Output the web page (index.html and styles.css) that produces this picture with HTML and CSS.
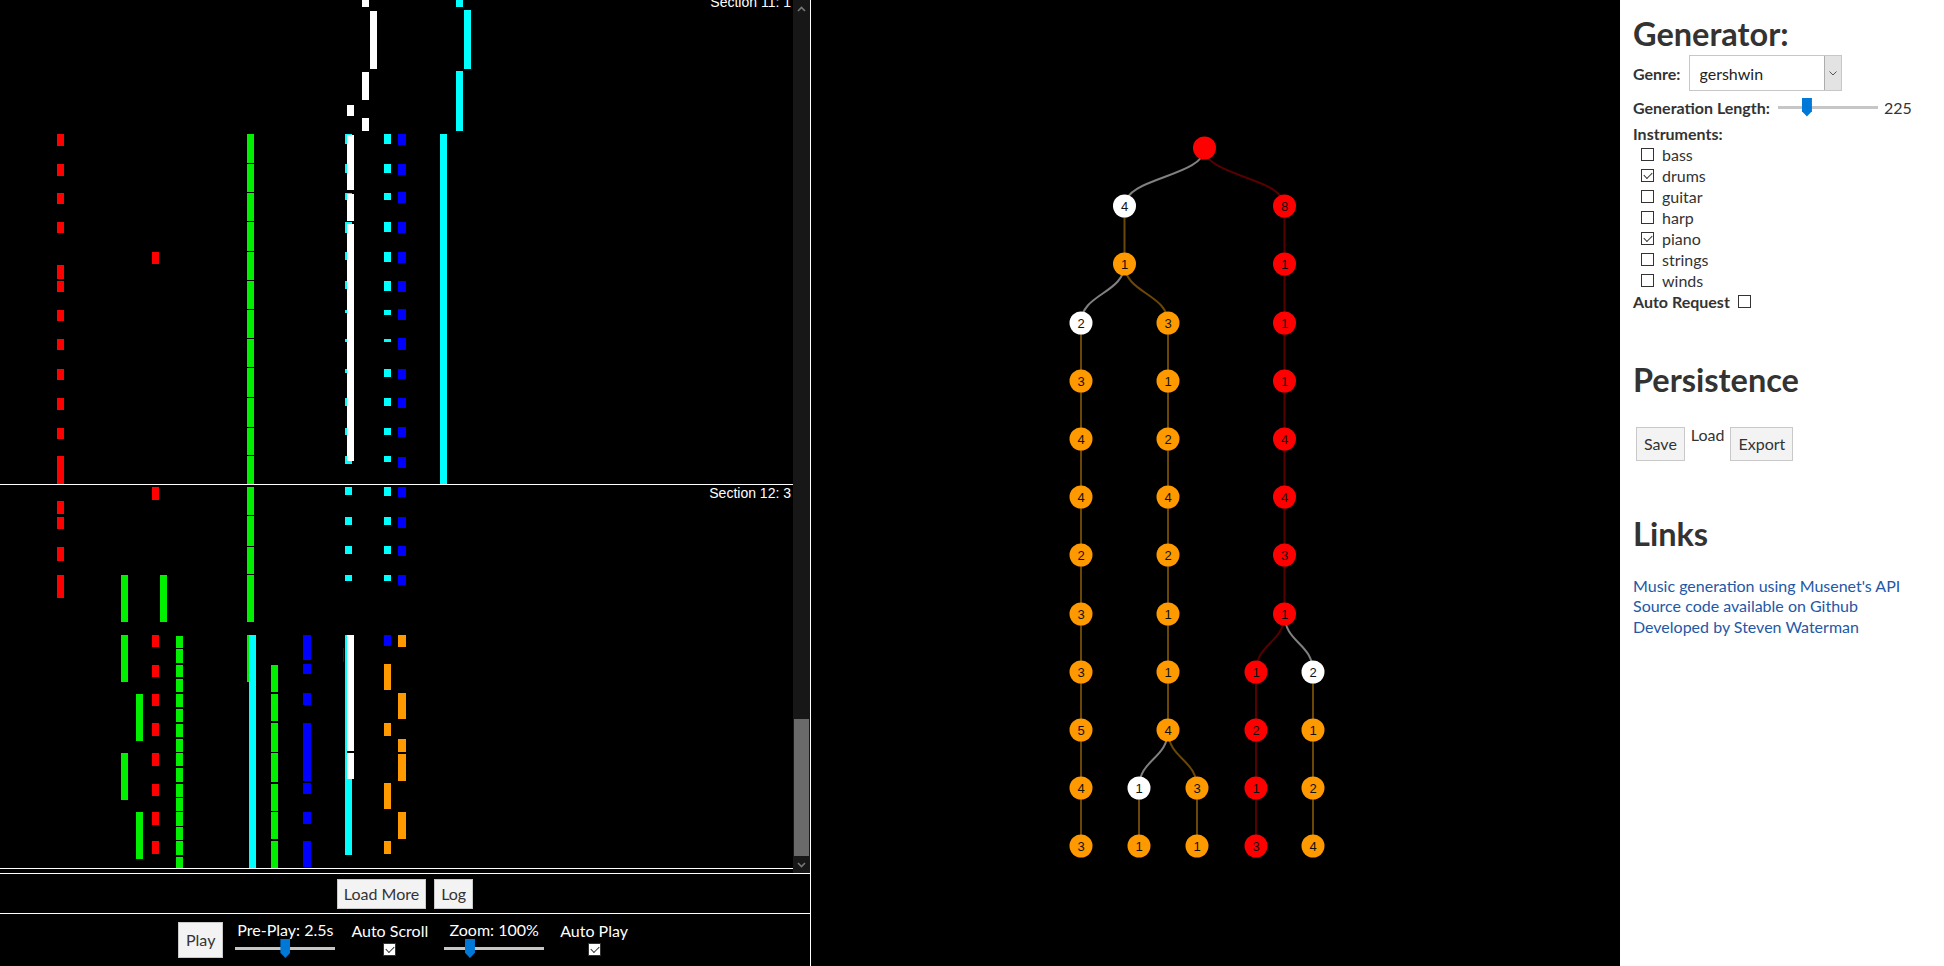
FILE: index.html
```html
<!DOCTYPE html>
<html lang="en">
<head>
<meta charset="utf-8">
<title>Musenet Tree</title>
<link rel="stylesheet" href="styles.css">
</head>
<body>
<div class="app">
  <section class="player">
    <div class="roll">
      <svg class="roll-svg" width="793" height="873" viewBox="0 0 793 873">
        <g fill="#ff0000">
          <rect x="57" y="134" width="7" height="12"/><rect x="57" y="164" width="7" height="12"/><rect x="57" y="193" width="7" height="11"/><rect x="57" y="222" width="7" height="11"/><rect x="57" y="265" width="7" height="14"/><rect x="57" y="281" width="7" height="11"/><rect x="57" y="310" width="7" height="11"/><rect x="57" y="339" width="7" height="11"/><rect x="57" y="369" width="7" height="11"/><rect x="57" y="398" width="7" height="12"/><rect x="57" y="428" width="7" height="11"/><rect x="57" y="456" width="7" height="28"/>
          <rect x="152" y="252" width="7" height="12"/>
          <rect x="152" y="487" width="7" height="13"/>
          <rect x="57" y="501" width="7" height="13"/><rect x="57" y="517" width="7" height="12"/><rect x="57" y="547" width="7" height="14"/><rect x="57" y="575" width="7" height="23"/>
          <rect x="152" y="635" width="7" height="12"/><rect x="152" y="665" width="7" height="12"/><rect x="152" y="694" width="7" height="12"/><rect x="152" y="723" width="7" height="13"/><rect x="152" y="753" width="7" height="13"/><rect x="152" y="784" width="7" height="12"/><rect x="152" y="812" width="7" height="13"/><rect x="152" y="841" width="7" height="13"/>
        </g>
        <g fill="#00f000">
          <rect x="247" y="134" width="7" height="29"/><rect x="247" y="164" width="7" height="28"/><rect x="247" y="193" width="7" height="28"/><rect x="247" y="222" width="7" height="29"/><rect x="247" y="252" width="7" height="28"/><rect x="247" y="281" width="7" height="28"/><rect x="247" y="310" width="7" height="28"/><rect x="247" y="339" width="7" height="28"/><rect x="247" y="368" width="7" height="29"/><rect x="247" y="398" width="7" height="29"/><rect x="247" y="428" width="7" height="27"/><rect x="247" y="456" width="7" height="28"/>
          <rect x="247" y="487" width="7" height="28"/><rect x="247" y="516" width="7" height="30"/><rect x="247" y="547" width="7" height="27"/><rect x="247" y="575" width="7" height="47"/>
          <rect x="247" y="635" width="2" height="47"/>
          <rect x="121" y="575" width="7" height="47"/><rect x="121" y="635" width="7" height="47"/><rect x="121" y="753" width="7" height="47"/>
          <rect x="160" y="575" width="7" height="47"/>
          <rect x="136" y="694" width="7" height="47"/><rect x="136" y="812" width="7" height="47"/>
          <rect x="176" y="636" width="7" height="12"/><rect x="176" y="649" width="7" height="14"/><rect x="176" y="665" width="7" height="12"/><rect x="176" y="679" width="7" height="13"/><rect x="176" y="694" width="7" height="13"/><rect x="176" y="709" width="7" height="13"/><rect x="176" y="724" width="7" height="13"/><rect x="176" y="739" width="7" height="13"/><rect x="176" y="753" width="7" height="13"/><rect x="176" y="768" width="7" height="14"/><rect x="176" y="784" width="7" height="13"/><rect x="176" y="798" width="7" height="13"/><rect x="176" y="812" width="7" height="14"/><rect x="176" y="827" width="7" height="13"/><rect x="176" y="841" width="7" height="14"/><rect x="176" y="857" width="7" height="11"/>
          <rect x="271" y="665" width="7" height="27"/><rect x="271" y="694" width="7" height="27"/><rect x="271" y="723" width="7" height="29"/><rect x="271" y="753" width="7" height="29"/><rect x="271" y="784" width="7" height="27"/><rect x="271" y="812" width="7" height="27"/><rect x="271" y="841" width="7" height="27"/>
        </g>
        <g fill="#00ffff">
          <rect x="345" y="134" width="7" height="10"/><rect x="345" y="164" width="7" height="9"/><rect x="345" y="193" width="7" height="7"/><rect x="345" y="222" width="7" height="11"/><rect x="345" y="252" width="7" height="8"/><rect x="345" y="281" width="7" height="8"/><rect x="345" y="310" width="7" height="3"/><rect x="345" y="339" width="7" height="3"/><rect x="345" y="369" width="7" height="4"/><rect x="345" y="398" width="7" height="8"/><rect x="345" y="428" width="7" height="7"/><rect x="345" y="456" width="7" height="8"/>
          <rect x="345" y="487" width="7" height="8"/><rect x="345" y="517" width="7" height="8"/><rect x="345" y="546" width="7" height="8"/><rect x="345" y="575" width="7" height="6"/>
          <rect x="345" y="635" width="2" height="144"/><rect x="345" y="779" width="7" height="76"/>
          <rect x="384" y="134" width="7" height="10"/><rect x="384" y="164" width="7" height="9"/><rect x="384" y="193" width="7" height="7"/><rect x="384" y="222" width="7" height="10"/><rect x="384" y="252" width="7" height="10"/><rect x="384" y="281" width="7" height="10"/><rect x="384" y="310" width="7" height="5"/><rect x="384" y="339" width="7" height="3"/><rect x="384" y="369" width="7" height="8"/><rect x="384" y="398" width="7" height="8"/><rect x="384" y="428" width="7" height="7"/><rect x="384" y="456" width="7" height="6"/>
          <rect x="384" y="487" width="7" height="9"/><rect x="384" y="517" width="7" height="8"/><rect x="384" y="546" width="7" height="8"/><rect x="384" y="575" width="7" height="6"/>
          <rect x="440" y="134" width="7" height="351"/>
          <rect x="456" y="0" width="7" height="7"/><rect x="456" y="71" width="7" height="60"/>
          <rect x="464" y="10" width="7" height="59"/>
          <rect x="249" y="635" width="7" height="233"/>
        </g>
        <g fill="#ffffff">
          <rect x="347" y="105" width="7" height="11"/><rect x="347" y="135" width="7" height="55"/><rect x="347" y="194" width="7" height="27"/><rect x="347" y="224" width="7" height="237"/>
          <rect x="347" y="635" width="7" height="116"/><rect x="347" y="753" width="7" height="26"/>
          <rect x="362" y="0" width="7" height="7"/><rect x="362" y="72" width="7" height="28"/><rect x="362" y="118" width="7" height="13"/>
          <rect x="370" y="11" width="7" height="58"/>
        </g>
        <g fill="#0000ff">
          <rect x="398" y="134" width="8" height="11"/><rect x="398" y="164" width="8" height="11"/><rect x="398" y="192" width="8" height="11"/><rect x="398" y="222" width="8" height="11"/><rect x="398" y="252" width="8" height="11"/><rect x="398" y="281" width="8" height="11"/><rect x="398" y="309" width="8" height="11"/><rect x="398" y="338" width="8" height="12"/><rect x="398" y="369" width="8" height="10"/><rect x="398" y="398" width="8" height="10"/><rect x="398" y="427" width="8" height="10"/><rect x="398" y="457" width="8" height="11"/>
          <rect x="398" y="487" width="8" height="10"/><rect x="398" y="517" width="8" height="11"/><rect x="398" y="546" width="8" height="10"/><rect x="398" y="575" width="8" height="10"/>
          <rect x="303" y="635" width="8" height="25"/><rect x="303" y="664" width="8" height="10"/><rect x="303" y="693" width="8" height="12"/><rect x="303" y="723" width="8" height="58"/><rect x="303" y="783" width="8" height="11"/><rect x="303" y="812" width="8" height="12"/><rect x="303" y="841" width="8" height="26"/>
          <rect x="343" y="648" width="1" height="14"/>
          <rect x="384" y="635" width="7" height="11"/>
        </g>
        <g fill="#ff9900">
          <rect x="398" y="635" width="8" height="12"/><rect x="398" y="693" width="8" height="26"/><rect x="398" y="739" width="8" height="13"/><rect x="398" y="754" width="8" height="27"/><rect x="398" y="812" width="8" height="27"/>
          <rect x="384" y="664" width="7" height="26"/><rect x="384" y="723" width="7" height="13"/><rect x="384" y="783" width="7" height="26"/><rect x="384" y="841" width="7" height="13"/>
        </g>
        <g stroke="#ffffff" stroke-width="1">
          <line x1="0" y1="484.5" x2="793" y2="484.5"/>
          <line x1="0" y1="868.5" x2="793" y2="868.5"/>
        </g>
        <g class="section-label" fill="#ffffff" text-anchor="end">
          <text x="791" y="7">Section 11: 1</text>
          <text x="791" y="498">Section 12: 3</text>
        </g>
      </svg>
      <div class="scrollbar">
        <div class="sb-btn">
          <svg width="9" height="6" viewBox="0 0 9 6"><path d="M1 5 L4.5 1.5 L8 5" fill="none" stroke="#777" stroke-width="1.6"/></svg>
        </div>
        <div class="sb-track"><div class="sb-thumb"></div></div>
        <div class="sb-btn">
          <svg width="9" height="6" viewBox="0 0 9 6"><path d="M1 1 L4.5 4.5 L8 1" fill="none" stroke="#777" stroke-width="1.6"/></svg>
        </div>
      </div>
    </div>
    <div class="load-row">
      <button class="btn btn-load">Load More</button>
      <button class="btn btn-load">Log</button>
    </div>
    <div class="controls">
      <button class="btn btn-play">Play</button>
      <label class="ctl ctl-range"><span class="ctl-label">Pre-Play: 2.5s</span><input class="slider" type="range" min="0" max="5" step="0.5" value="2.5"></label>
      <label class="ctl"><span class="ctl-label">Auto Scroll</span><input class="cb" type="checkbox" checked></label>
      <label class="ctl ctl-range"><span class="ctl-label">Zoom: 100%</span><input class="slider" type="range" min="10" max="400" value="100"></label>
      <label class="ctl"><span class="ctl-label">Auto Play</span><input class="cb" type="checkbox" checked></label>
    </div>
  </section>

  <section class="tree">
    <svg class="tree-svg" width="809" height="966" viewBox="811 0 809 966">
      <g fill="none" stroke-width="2">
        <path d="M1204.5 148 C1204.5 177 1124.5 177 1124.5 206" stroke="#808080"/>
        <path d="M1204.5 148 C1204.5 177 1284.5 177 1284.5 206" stroke="#560000"/>
        <path d="M1124.5 206 L1124.5 264" stroke="#6b4706"/>
        <path d="M1124.5 264 C1124.5 293.5 1081 293.5 1081 323" stroke="#808080"/>
        <path d="M1124.5 264 C1124.5 293.5 1168 293.5 1168 323" stroke="#6b4706"/>
        <path d="M1081 323 L1081 846" stroke="#6b4706"/>
        <path d="M1168 323 L1168 730" stroke="#6b4706"/>
        <path d="M1168 730 C1168 759 1139 759 1139 788" stroke="#808080"/>
        <path d="M1168 730 C1168 759 1197 759 1197 788" stroke="#6b4706"/>
        <path d="M1139 788 L1139 846" stroke="#6b4706"/>
        <path d="M1197 788 L1197 846" stroke="#6b4706"/>
        <path d="M1284.5 206 L1284.5 614" stroke="#560000"/>
        <path d="M1284.5 614 C1284.5 643 1256 643 1256 672" stroke="#560000"/>
        <path d="M1284.5 614 C1284.5 643 1313 643 1313 672" stroke="#808080"/>
        <path d="M1256 672 L1256 846" stroke="#560000"/>
        <path d="M1313 672 L1313 846" stroke="#6b4706"/>
      </g>
      <g class="nodes">
        <circle cx="1204.5" cy="148" r="11.5" class="n-red"/>

        <circle cx="1124.5" cy="206" r="11.5" class="n-white"/><text x="1124.5" y="210.5">4</text>
        <circle cx="1124.5" cy="264" r="11.5" class="n-orange"/><text x="1124.5" y="268.5">1</text>

        <circle cx="1081" cy="323" r="11.5" class="n-white"/><text x="1081" y="327.5">2</text>
        <circle cx="1081" cy="381" r="11.5" class="n-orange"/><text x="1081" y="385.5">3</text>
        <circle cx="1081" cy="439" r="11.5" class="n-orange"/><text x="1081" y="443.5">4</text>
        <circle cx="1081" cy="497" r="11.5" class="n-orange"/><text x="1081" y="501.5">4</text>
        <circle cx="1081" cy="555" r="11.5" class="n-orange"/><text x="1081" y="559.5">2</text>
        <circle cx="1081" cy="614" r="11.5" class="n-orange"/><text x="1081" y="618.5">3</text>
        <circle cx="1081" cy="672" r="11.5" class="n-orange"/><text x="1081" y="676.5">3</text>
        <circle cx="1081" cy="730" r="11.5" class="n-orange"/><text x="1081" y="734.5">5</text>
        <circle cx="1081" cy="788" r="11.5" class="n-orange"/><text x="1081" y="792.5">4</text>
        <circle cx="1081" cy="846" r="11.5" class="n-orange"/><text x="1081" y="850.5">3</text>

        <circle cx="1168" cy="323" r="11.5" class="n-orange"/><text x="1168" y="327.5">3</text>
        <circle cx="1168" cy="381" r="11.5" class="n-orange"/><text x="1168" y="385.5">1</text>
        <circle cx="1168" cy="439" r="11.5" class="n-orange"/><text x="1168" y="443.5">2</text>
        <circle cx="1168" cy="497" r="11.5" class="n-orange"/><text x="1168" y="501.5">4</text>
        <circle cx="1168" cy="555" r="11.5" class="n-orange"/><text x="1168" y="559.5">2</text>
        <circle cx="1168" cy="614" r="11.5" class="n-orange"/><text x="1168" y="618.5">1</text>
        <circle cx="1168" cy="672" r="11.5" class="n-orange"/><text x="1168" y="676.5">1</text>
        <circle cx="1168" cy="730" r="11.5" class="n-orange"/><text x="1168" y="734.5">4</text>

        <circle cx="1139" cy="788" r="11.5" class="n-white"/><text x="1139" y="792.5">1</text>
        <circle cx="1139" cy="846" r="11.5" class="n-orange"/><text x="1139" y="850.5">1</text>
        <circle cx="1197" cy="788" r="11.5" class="n-orange"/><text x="1197" y="792.5">3</text>
        <circle cx="1197" cy="846" r="11.5" class="n-orange"/><text x="1197" y="850.5">1</text>

        <circle cx="1284.5" cy="206" r="11.5" class="n-red"/><text x="1284.5" y="210.5">8</text>
        <circle cx="1284.5" cy="264" r="11.5" class="n-red"/><text x="1284.5" y="268.5">1</text>
        <circle cx="1284.5" cy="323" r="11.5" class="n-red"/><text x="1284.5" y="327.5">1</text>
        <circle cx="1284.5" cy="381" r="11.5" class="n-red"/><text x="1284.5" y="385.5">1</text>
        <circle cx="1284.5" cy="439" r="11.5" class="n-red"/><text x="1284.5" y="443.5">4</text>
        <circle cx="1284.5" cy="497" r="11.5" class="n-red"/><text x="1284.5" y="501.5">4</text>
        <circle cx="1284.5" cy="555" r="11.5" class="n-red"/><text x="1284.5" y="559.5">3</text>
        <circle cx="1284.5" cy="614" r="11.5" class="n-red"/><text x="1284.5" y="618.5">1</text>

        <circle cx="1256" cy="672" r="11.5" class="n-red"/><text x="1256" y="676.5">1</text>
        <circle cx="1256" cy="730" r="11.5" class="n-red"/><text x="1256" y="734.5">2</text>
        <circle cx="1256" cy="788" r="11.5" class="n-red"/><text x="1256" y="792.5">1</text>
        <circle cx="1256" cy="846" r="11.5" class="n-red"/><text x="1256" y="850.5">3</text>

        <circle cx="1313" cy="672" r="11.5" class="n-white"/><text x="1313" y="676.5">2</text>
        <circle cx="1313" cy="730" r="11.5" class="n-orange"/><text x="1313" y="734.5">1</text>
        <circle cx="1313" cy="788" r="11.5" class="n-orange"/><text x="1313" y="792.5">2</text>
        <circle cx="1313" cy="846" r="11.5" class="n-orange"/><text x="1313" y="850.5">4</text>
      </g>
    </svg>
  </section>

  <aside class="sidebar">
    <h2 class="h-gen">Generator:</h2>
    <div class="row row-genre">
      <span class="lbl">Genre:</span>
      <div class="select-wrap">
        <select class="select">
          <option>gershwin</option>
          <option>chopin</option>
          <option>mozart</option>
          <option>jazz</option>
        </select>
        <span class="select-arrow"><svg width="8" height="5" viewBox="0 0 8 5"><path d="M0.5 0.5 L4 4 L7.5 0.5" fill="none" stroke="#555" stroke-width="1"/></svg></span>
      </div>
    </div>
    <div class="row row-length">
      <span class="lbl">Generation Length:</span>
      <input class="slider slider-len" type="range" min="1" max="841" value="225">
      <span class="len-val">225</span>
    </div>
    <div class="lbl instr-title">Instruments:</div>
    <ul class="instr">
      <li><label><input class="cb" type="checkbox"> bass</label></li>
      <li><label><input class="cb" type="checkbox" checked> drums</label></li>
      <li><label><input class="cb" type="checkbox"> guitar</label></li>
      <li><label><input class="cb" type="checkbox"> harp</label></li>
      <li><label><input class="cb" type="checkbox" checked> piano</label></li>
      <li><label><input class="cb" type="checkbox"> strings</label></li>
      <li><label><input class="cb" type="checkbox"> winds</label></li>
    </ul>
    <label class="lbl auto-req">Auto Request <input class="cb" type="checkbox"></label>

    <h2 class="h-pers">Persistence</h2>
    <div class="persist">
      <button class="btn btn-side">Save</button>
      <span class="load-lbl">Load</span>
      <button class="btn btn-side">Export</button>
    </div>

    <h2 class="h-links">Links</h2>
    <div class="links">
      <a href="#">Music generation using Musenet's API</a>
      <a href="#">Source code available on Github</a>
      <a href="#">Developed by Steven Waterman</a>
    </div>
  </aside>
</div>
</body>
</html>
```

FILE: styles.css
```css
* { box-sizing: border-box; }
html, body { margin: 0; padding: 0; background: #000; }
body { font-family: Lato, "Segoe UI", "Noto Sans", sans-serif; }

.app { display: flex; width: 1944px; height: 966px; overflow: hidden; }

/* ---------- player (left) ---------- */
.player {
  width: 811px; flex: none;
  display: flex; flex-direction: column;
  border-right: 1px solid #fff;
  background: #000;
}
.roll { height: 874px; flex: none; display: flex; border-bottom: 1px solid #fff; }
.roll-svg { display: block; flex: none; }
.section-label { font-family: "Liberation Sans", Arial, sans-serif; font-size: 14px; }

.scrollbar { width: 17px; flex: none; display: flex; flex-direction: column; background: #171717; }
.sb-btn { height: 17px; flex: none; display: flex; align-items: center; justify-content: center; }
.sb-track { flex: 1; display: flex; flex-direction: column; justify-content: flex-end; padding: 0 1px; }
.sb-thumb { height: 137px; background: #6a6a6a; }

.load-row {
  height: 40px; flex: none;
  display: flex; align-items: center; justify-content: center; gap: 8px;
  border-bottom: 1px solid #fff;
}
.btn {
  font-family: inherit; font-size: 16px; color: #333;
  background: #f3f3f3; border: 1px solid #c9c9c9; border-radius: 0;
  margin: 0; line-height: 1;
}
.btn-load { height: 30px; padding: 0 6px; }
.btn-play { height: 36px; padding: 0 7px; margin-right: -4px; }

.controls {
  flex: 1; display: flex; align-items: center; justify-content: center; gap: 16px;
  color: #fff; font-size: 16px; padding-right: 4px; padding-bottom: 1px;
}
.ctl { display: flex; flex-direction: column; align-items: center; }
.ctl-label { line-height: 18px; white-space: nowrap; }
.ctl .cb { margin-top: 3px; margin-bottom: 2px; }

.slider {
  -webkit-appearance: none; appearance: none;
  width: 100px; height: 20px; margin: 0; padding: 0; background: transparent;
}
.slider::-webkit-slider-runnable-track { height: 3px; background: #c6c6c6; border: none; }
.slider::-webkit-slider-thumb {
  -webkit-appearance: none; appearance: none;
  width: 10px; height: 19px; margin-top: -8px; border: none;
  background: #0078d7;
  clip-path: polygon(0 0, 100% 0, 100% 72%, 50% 100%, 0 72%);
}

.cb {
  -webkit-appearance: none; appearance: none;
  width: 13px; height: 13px; margin: 0;
  border: 1px solid #333; background: #fff;
  position: relative; vertical-align: middle; flex: none;
}
.cb:checked::after {
  content: ""; position: absolute; left: 2px; top: 2px;
  width: 7px; height: 4px;
  border-left: 1px solid #333; border-bottom: 1px solid #333;
  transform: rotate(-45deg);
}

/* ---------- tree (middle) ---------- */
.tree { flex: 1; background: #000; }
.tree-svg { display: block; }
.n-red { fill: #ff0000; }
.n-orange { fill: #ff9900; }
.n-white { fill: #ffffff; }
.nodes text {
  font-family: "Liberation Sans", Arial, sans-serif; font-size: 13px;
  fill: #111; text-anchor: middle;
}

/* ---------- sidebar (right) ---------- */
.sidebar {
  width: 324px; flex: none; background: #fff; color: #333;
  padding: 15px 0 0 13px; font-size: 16px;
  display: flex; flex-direction: column; align-items: flex-start;
}
.sidebar h2 { font-size: 32.5px; font-weight: 700; line-height: 38px; margin: 0; color: #333; }
.lbl { font-weight: 700; }
.row { display: flex; align-items: center; }
.row-genre { margin-top: 2px; gap: 8px; height: 36px; }
.select-wrap { position: relative; width: 153px; height: 36px; }
.select {
  -webkit-appearance: none; appearance: none;
  width: 100%; height: 100%; margin: 0;
  border: 1px solid #c7c7c7; background: #fff; color: #222;
  font-family: inherit; font-size: 16px; padding: 0 0 0 10px;
  border-radius: 0;
}
.select-arrow {
  position: absolute; right: 1px; top: 1px; bottom: 1px; width: 17px;
  background: #e3e3e3; border-left: 1px solid #adadad;
  display: flex; align-items: center; justify-content: center;
}
.row-length { margin-top: 6px; height: 20px; }
.slider-len { margin-left: 8px; }
.len-val { margin-left: 6px; }
.instr-title { margin-top: 5.5px; line-height: 21px; }
.instr { list-style: none; margin: 0; padding: 0 0 0 8px; }
.instr li { line-height: 21px; height: 21px; }
.instr label { display: flex; align-items: center; gap: 8px; }
.auto-req { display: flex; align-items: center; gap: 8px; line-height: 21px; }

.h-pers { margin-top: 49px !important; }
.persist { display: flex; align-items: flex-start; gap: 6px; margin-top: 26px; padding-left: 3px; }
.btn-side { height: 34px; padding: 0 7px; margin-top: 2px; }
.load-lbl { line-height: 19px; }

.h-links { margin-top: 54px !important; }
.links { margin-top: 23px; display: flex; flex-direction: column; }
.links a { color: #2458a6; text-decoration: none; line-height: 20.5px; }
```
